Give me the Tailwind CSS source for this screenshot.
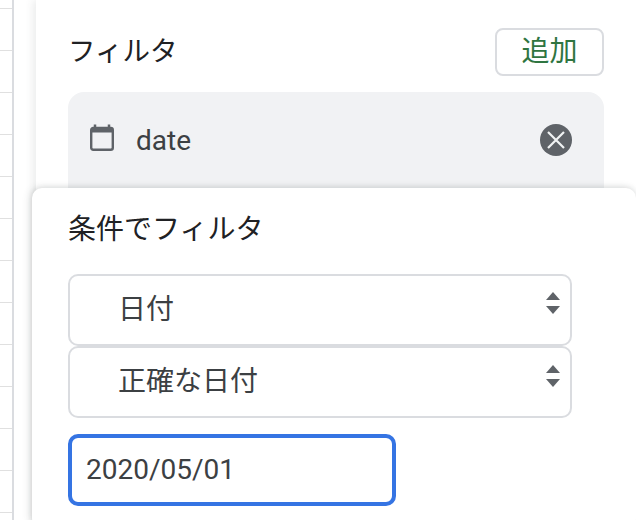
<!DOCTYPE html>
<html lang="ja">
  <head>
    <meta charset="UTF-8" />
    <title>フィルタ</title>
    <script src="https://cdn.jsdelivr.net/npm/@tailwindcss/browser@4"></script>
  </head>
  <body class="bg-white">
    <div class="relative flex h-[520px] w-[636px] overflow-hidden bg-white font-['Roboto','Noto_Sans_CJK_JP',sans-serif]">
      <!-- sheet edge -->
      <div class="flex h-full w-[14px] shrink-0 flex-col border-r-2 border-[#dadce0] pt-[8px]">
        <div class="h-[42px] shrink-0 border-t border-[#e0e0e0]"></div>
        <div class="h-[42px] shrink-0 border-t border-[#e0e0e0]"></div>
        <div class="h-[42px] shrink-0 border-t border-[#e0e0e0]"></div>
        <div class="h-[42px] shrink-0 border-t border-[#e0e0e0]"></div>
        <div class="h-[42px] shrink-0 border-t border-[#e0e0e0]"></div>
        <div class="h-[42px] shrink-0 border-t border-[#e0e0e0]"></div>
        <div class="h-[42px] shrink-0 border-t border-[#e0e0e0]"></div>
        <div class="h-[42px] shrink-0 border-t border-[#e0e0e0]"></div>
        <div class="h-[42px] shrink-0 border-t border-[#e0e0e0]"></div>
        <div class="h-[42px] shrink-0 border-t border-[#e0e0e0]"></div>
        <div class="h-[42px] shrink-0 border-t border-[#e0e0e0]"></div>
        <div class="h-[42px] shrink-0 border-t border-[#e0e0e0]"></div>
        <div class="h-[42px] shrink-0 border-t border-[#e0e0e0]"></div>
      </div>

      <!-- side panel -->
      <div class="ml-[22px] h-full flex-1 bg-white pt-[28px] pr-[32px] pl-[32px] shadow-[-3px_0_8px_rgba(60,64,67,0.1)]">
        <div class="flex h-[48px] items-center justify-between">
          <h2 class="text-[27.5px] leading-[44px] text-[#202124]">フィルタ</h2>
          <button type="button" class="h-[48px] w-[109px] rounded-[8px] border-2 border-[#dadce0] text-[28px] leading-none text-[#2f7541]">追加</button>
        </div>
        <div class="mt-[16px] flex h-[110px] items-start rounded-t-[16px] bg-[#f1f2f4] pt-[30px] pr-[32px] pl-[20px]">
          <svg class="mt-[2px] h-[30px] w-[28px] shrink-0" viewBox="0 0 28 30" fill="none">
            <path d="M7 0.5v4M21 0.5v4" stroke="#5f6368" stroke-width="2.5" />
            <rect x="3.2" y="4" width="21.6" height="21.8" rx="2" stroke="#5f6368" stroke-width="2.4" />
            <rect x="3" y="4" width="22" height="4.5" fill="#5f6368" />
          </svg>
          <span class="mt-[3px] ml-[20px] text-[28px] leading-[32px] text-[#3c4043]">date</span>
          <svg class="mt-[2px] ml-auto h-[32px] w-[32px] shrink-0" viewBox="0 0 32 32">
            <circle cx="16" cy="16" r="16" fill="#5f6368" />
            <path d="M8 8l16 16M24 8l-16 16" stroke="#f1f3f4" stroke-width="2.2" />
          </svg>
        </div>
      </div>

      <!-- popup over the card -->
      <div class="absolute top-[188px] left-[32px] h-[340px] w-[604px] rounded-[10px] bg-white pt-[22px] pl-[36px] shadow-[0_-1px_5px_rgba(60,64,67,0.1),-2px_0_8px_rgba(60,64,67,0.14)]">
        <p class="text-[28px] leading-[40px] text-[#202124]">条件でフィルタ</p>
        <div class="mt-[24px] flex w-[504px] flex-col">
          <div class="relative flex h-[72px] items-center rounded-[10px] border-2 border-[#dadce0] pl-[48px] text-[28px] text-[#3c4043]">
            日付
            <svg class="absolute top-[15px] right-[9px] h-[24px] w-[16px]" viewBox="0 0 16 24" fill="#5f6368">
              <path d="M8 1l7 8H1zM1 15h14l-7 8z" />
            </svg>
          </div>
          <div class="relative flex h-[72px] items-center rounded-[10px] border-2 border-[#dadce0] pb-[1px] pl-[48px] text-[28px] text-[#3c4043]">
            正確な日付
            <svg class="absolute top-[16px] right-[9px] h-[24px] w-[16px]" viewBox="0 0 16 24" fill="#5f6368">
              <path d="M8 1l7 8H1zM1 15h14l-7 8z" />
            </svg>
          </div>
        </div>
        <div class="mt-[16px] flex h-[72px] w-[328px] items-center rounded-[10px] border-4 border-[#3574e3] pl-[14px] text-[28px] text-[#3c4043]">2020/05/01</div>
      </div>
    </div>
  </body>
</html>
